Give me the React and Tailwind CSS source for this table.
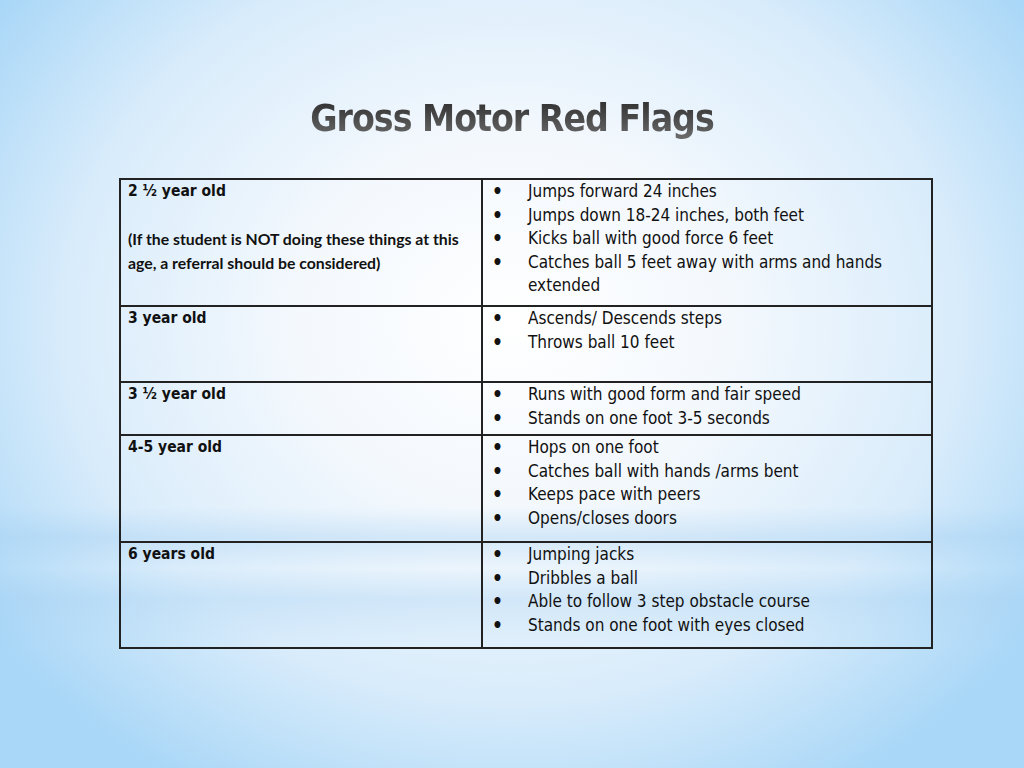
import React from 'react';

const rows = [
  {
    age: '2 ½ year old',
    note: true,
    h: 'h-[127px]',
    items: [
      'Jumps forward 24 inches',
      'Jumps down 18-24 inches, both feet',
      'Kicks ball with good force 6 feet',
      'Catches ball 5 feet away with arms and hands extended',
    ],
  },
  { age: '3 year old', h: 'h-[76px]', items: ['Ascends/ Descends steps', 'Throws ball 10 feet'] },
  { age: '3 ½ year old', h: 'h-[53px]', items: ['Runs with good form and fair speed', 'Stands on one foot 3-5 seconds'] },
  {
    age: '4-5 year old',
    h: 'h-[107px]',
    items: ['Hops on one foot', 'Catches ball with hands /arms bent', 'Keeps pace with peers', 'Opens/closes doors'],
  },
  {
    age: '6 years old',
    h: 'h-[106px]',
    items: ['Jumping jacks', 'Dribbles a ball', 'Able to follow 3 step obstacle course', 'Stands on one foot with eyes closed'],
  },
];

const App = () => {
  return (
    <div className="w-[1024px] h-[768px] overflow-hidden bg-[radial-gradient(ellipse_62%_70%_at_50%_42%,#ffffff_0%,#f3f8fd_35%,#d9ecfb_70%,#a9d7f7_100%)]">
      <div className="w-full h-full flex flex-col items-center bg-[linear-gradient(180deg,transparent_0%,transparent_66%,rgba(160,205,240,0.35)_70%,transparent_74%,rgba(160,205,240,0.3)_78%,transparent_84%,transparent_100%)]">
        <h1 className="mt-[94px] h-[50px] text-[37px] leading-[50px] font-bold tracking-[-1px] bg-[linear-gradient(180deg,#2e2e2e_10%,#6b6b6b_90%)] bg-clip-text text-transparent font-['DejaVu_Sans_Condensed','DejaVu_Sans',sans-serif]">
          Gross Motor Red Flags
        </h1>
        <table className="self-start ml-[119px] mt-[34px] border-collapse border-2 border-[#222] text-[#111]">
          <tbody>
            {rows.map((r) => (
              <tr key={r.age} className={r.h}>
                <td className="w-[362px] align-top border-2 border-[#222] px-[7px] pt-0">
                  <div className="text-[15.5px] leading-[23.5px] font-bold font-['DejaVu_Sans_Condensed','DejaVu_Sans',sans-serif]">{r.age}</div>
                  {r.note && (
                    <div className="mt-[23.5px] text-[15.8px] leading-[23.5px] font-bold whitespace-nowrap font-['Lato','Open_Sans',sans-serif]">
                      (If the student is NOT doing these things at this
                      <br />
                      age, a referral should be considered)
                    </div>
                  )}
                </td>
                <td className="w-[450px] align-top border-2 border-[#222] pt-0">
                  <ul className="text-[17px] leading-[23.5px] font-['DejaVu_Sans_Condensed','DejaVu_Sans',sans-serif]">
                    {r.items.map((it) => (
                      <li key={it} className="flex">
                        <span className="w-[45px] h-[23.5px] shrink-0 pl-[9px] text-[19px] leading-[23.5px] font-bold">•</span>
                        <span className="pr-4">{it}</span>
                      </li>
                    ))}
                  </ul>
                </td>
              </tr>
            ))}
          </tbody>
        </table>
      </div>
    </div>
  );
};

export default App;
